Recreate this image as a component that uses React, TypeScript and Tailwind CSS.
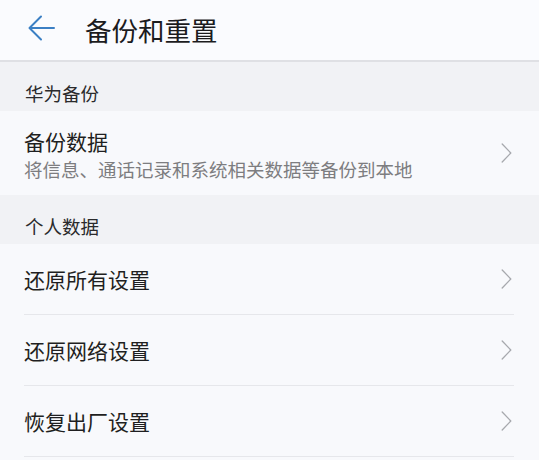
const font = { fontFamily: '"Noto Sans CJK SC", "Noto Sans", sans-serif' };

export default function App() {
  return (
    <div className="min-h-screen w-[549px] bg-white flex" style={font}>
      <div className="w-[539px] h-[460px] bg-[#f8f9fc] flex flex-col overflow-hidden">
        {/* Header */}
        <header className="h-[62px] shrink-0 bg-[#fafbfe] flex items-center pl-[28px] border-b-2 border-[#dfe0e4]">
          <svg width="27" height="26" viewBox="0 0 27 26" fill="none" className="mt-[-4px]">
            <path d="M26 13H2M13 1.5L1.5 13L13 24.5" stroke="#3b7fc4" strokeWidth="2" strokeLinecap="round" strokeLinejoin="round" />
          </svg>
          <h1 className="ml-[30px] text-[26.5px] leading-none text-[#1c1c1e] mt-[1px]">备份和重置</h1>
        </header>

        <SectionHeader label="华为备份" />
        <div className="h-[84px] shrink-0 flex items-center pl-[24px] pr-[27px]">
          <div className="flex-1 flex flex-col mt-[3px]">
            <span className="text-[21px] leading-[28px] text-[#1f1f21]">备份数据</span>
            <span className="text-[18.5px] leading-[28px] text-[#7d7d80]">将信息、通话记录和系统相关数据等备份到本地</span>
          </div>
          <Chevron />
        </div>

        <SectionHeader label="个人数据" />
        <div className="flex flex-col pl-[24px] pr-[25px]">
          <Row label="还原所有设置" />
          <Row label="还原网络设置" />
          <Row label="恢复出厂设置" />
        </div>
      </div>
    </div>
  );
}

function SectionHeader({ label }: { label: string }) {
  return (
    <div className="h-[49px] shrink-0 bg-[#f1f2f5] flex items-start pl-[25px] pt-[22px]">
      <span className="text-[18.5px] leading-none text-[#2a2a2c]">{label}</span>
    </div>
  );
}

function Row({ label }: { label: string }) {
  return (
    <div className="h-[71px] shrink-0 flex items-center pr-[2px] border-b-[1.5px] border-[#e6e7eb]">
      <span className="flex-1 text-[21px] leading-none text-[#1f1f21] mt-[1px]">{label}</span>
      <Chevron />
    </div>
  );
}

function Chevron() {
  return (
    <svg width="11" height="20" viewBox="0 0 11 20" fill="none" className="mt-[-1px]">
      <path d="M1.2 1L9.8 10L1.2 19" stroke="#a7a9ae" strokeWidth="1.3" strokeLinecap="round" strokeLinejoin="round" />
    </svg>
  );
}
